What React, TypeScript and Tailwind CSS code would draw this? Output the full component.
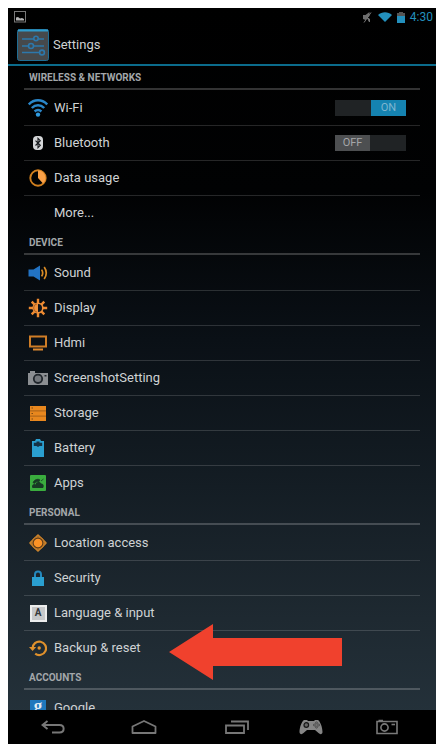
import { useState, type ReactNode } from "react";

const ORANGE = "#e8871e";
const BLUE = "#2a9fd0";

function WifiIcon() {
  return (
    <svg viewBox="0 0 20 18" className="w-5 h-[18px]" fill="none" stroke="#2a86c8" strokeWidth="2.5">
      <path d="M.8 5.400C6 0 14 0 19.200 5.400" />
      <path d="M3.800 9c3.700-3.800 8.700-3.800 12.400 0" />
      <path d="M6.600 12.500c2.100-2.100 4.700-2.100 6.800 0" />
      <circle cx="10" cy="15.600" r="2.200" fill="#2f9be0" stroke="none" />
    </svg>
  );
}

function BluetoothIcon() {
  return (
    <svg viewBox="0 0 10 14" className="w-[10px] h-[14px]">
      <rect width="10" height="14" rx="4" fill="#d4d6d8" />
      <path d="M2.500 4.700 7.300 9.300 5 11.600V2.400l2.300 2.300-4.800 4.800" fill="none" stroke="#16191c" strokeWidth="1.100" />
    </svg>
  );
}

function DataUsageIcon() {
  return (
    <svg viewBox="0 0 18 18" className="w-[18px] h-[18px]">
      <circle cx="9" cy="9" r="7.700" fill="none" stroke="#d07f1e" strokeWidth="1.900" />
      <path d="M9 9V1.500a7.500 7.500 0 0 1 5 13Z" fill="#f9a047" />
    </svg>
  );
}

function SoundIcon() {
  return (
    <svg viewBox="0 0 20 16" className="w-5 h-4">
      <path d="M.5 4.500h5L12 .5v15L5.500 11.500h-5Z" fill="#2273c4" />
      <path d="M13.600 4.600c1.300 2 1.300 4.800 0 6.800" fill="none" stroke="#d98b25" strokeWidth="1.700" />
      <path d="M16.200 2c2.500 3.600 2.500 8.400 0 12" fill="none" stroke="#d98b25" strokeWidth="1.700" />
    </svg>
  );
}

function DisplayIcon() {
  return (
    <svg viewBox="0 0 20 20" className="w-5 h-5">
      <path
        d="M10 .8v18.400M.8 10h18.400M3.700 3.700l12.600 12.600M3.700 16.300 16.300 3.700"
        stroke="#ee8a30"
        strokeWidth="2.400"
      />
      <circle cx="10" cy="10" r="5.600" fill="#f0903a" />
      <path d="M10 6a4 4 0 0 1 0 8Z" fill="#12161b" />
      <path d="M9 5.800a4.300 4.300 0 0 0 0 8.400" fill="none" stroke="#8d501c" strokeWidth="0.700" />
    </svg>
  );
}

function HdmiIcon() {
  return (
    <svg viewBox="0 0 18 16" className="w-[18px] h-4">
      <rect x="1" y="1.500" width="16" height="10" fill="none" stroke="#cf7d26" strokeWidth="2" />
      <path d="M4 13.500h10v2H4Z" fill="#e08a30" />
    </svg>
  );
}

function CameraIcon() {
  return (
    <svg viewBox="0 0 20 16" className="w-5 h-4">
      <path d="M0 3h2V1h5v2h13v12H0Z" fill="#8b8e92" />
      <circle cx="10" cy="8.800" r="4.200" fill="#74787d" stroke="#20262c" strokeWidth="1.800" />
      <path d="M16.500 5h2v1.500h-2Z" fill="#20262c" />
    </svg>
  );
}

function StorageIcon() {
  return (
    <svg viewBox="0 0 16 15" className="w-4 h-[15px]">
      <path d="M0 0h16v15H0Z" fill="#b2671a" />
      <path d="M0 0h16v4.200H0ZM0 5.400h16v4.200H0ZM0 10.800h16V15H0Z" fill={ORANGE} />
      <path d="M1.500 1.600h1.500v1h-1.500ZM1.500 7h1.500v1h-1.500ZM1.500 12.400h1.500v1h-1.500Z" fill="#7d4a12" />
    </svg>
  );
}

function BatteryIcon() {
  return (
    <svg viewBox="0 0 12 18" className="w-3 h-[18px]">
      <path d="M4 0h4l1 2h3v16H0V2h3Z" fill={BLUE} />
      <path d="M4.500 2.400h3v1.400h2.700v3.200H7.500L6 8 4.500 7H1.800V3.800h2.700Z" fill="#143246" />
    </svg>
  );
}

function AppsIcon() {
  return (
    <svg viewBox="0 0 16 16" className="w-4 h-4">
      <rect width="16" height="16" rx="1" fill="#3aad3e" />
      <path d="M2 11.500c0-2.500 2.500-3.200 3.500-2 .8-3 4.500-3 5.500-1 2.500 0 3.500 2.500 2 4.500H3.500C2.500 13 2 12.500 2 11.500Z" fill="#173a25" />
      <path d="M3 7.500c1.500-3 5-4 7-2.500L8.500 7C7 6.500 5 7 4.500 8.500ZM11 6l2.500-2" stroke="#173a25" strokeWidth="0.800" fill="#173a25" />
    </svg>
  );
}

function LocationIcon() {
  return (
    <svg viewBox="0 0 18 18" className="w-[18px] h-[18px]">
      <path d="M9 1.200 16.800 9 9 16.800 1.200 9Z" fill="none" stroke="#c9822c" strokeWidth="1.800" strokeLinejoin="round" />
      <circle cx="9" cy="9" r="6" fill="#5a3b1a" stroke="#c07a28" strokeWidth="1.200" />
      <circle cx="9" cy="9" r="4.300" fill="#fb9226" />
    </svg>
  );
}

function LockIcon() {
  return (
    <svg viewBox="0 0 12 16" className="w-3 h-4">
      <path d="M3 8V4.500a3 3 0 0 1 6 0V8" fill="none" stroke="#2488bd" strokeWidth="2" />
      <path d="M0 7h12v9H0Z" fill={BLUE} />
    </svg>
  );
}

function LanguageIcon() {
  return (
    <span className="flex size-[17px] items-center justify-center border-2 border-[#eceded] bg-[#c6c8ca] text-[10px] leading-none font-bold text-[#34383c]">
      A
    </span>
  );
}

function BackupIcon() {
  return (
    <svg viewBox="0 0 18 18" className="w-[18px] h-[18px]">
      <path d="M3.600 9.500A6.700 6.700 0 1 1 6.200 14.600" fill="none" stroke="#e0912c" strokeWidth="2.200" />
      <path d="M0 8h7.200L3.600 12Z" fill="#e0912c" />
      <circle cx="10.200" cy="9" r="1.700" fill="#e0912c" />
    </svg>
  );
}

function GoogleIcon() {
  return (
    <span className="flex size-4 items-center justify-center bg-[#1f78bd] pb-1 font-['Liberation_Serif',serif] text-[17px] leading-none font-bold text-[#e4edf4]">
      g
    </span>
  );
}

function Toggle({ label, on, onChange }: { label: string; on: boolean; onChange: (v: boolean) => void }) {
  return (
    <label className="relative mr-[14px] flex h-4 w-[71px] cursor-pointer bg-[#202325] text-[11px] leading-4">
      <input
        type="checkbox"
        className="sr-only"
        aria-label={label}
        checked={on}
        onChange={(e) => onChange(e.target.checked)}
      />
      {on ? (
        <span className="ml-auto w-[35px] bg-[#1583b1] text-center text-[#7fb6d0]">ON</span>
      ) : (
        <span className="w-[35px] bg-[#4d4f51] text-center text-[#a5a7a9]">OFF</span>
      )}
    </label>
  );
}

type RowProps = { icon?: ReactNode; text: string; children?: ReactNode };

function Row({ icon, text, children }: RowProps) {
  return (
    <li className="relative flex h-[35px] items-center border-b border-white/15 first:h-9 last:border-transparent">
      <a href="#" className="flex flex-1 items-center">
        <span className="mr-[2px] flex w-7 items-center justify-center">{icon}</span>
        {text}
      </a>
      {children}
    </li>
  );
}

function Section({ title, children }: { title: string; children: ReactNode }) {
  return (
    <section>
      <h2 className="h-6 border-b-2 border-white/20 pl-[5px] text-[10px] leading-6 font-bold text-[#a3a7aa]">
        {title}
      </h2>
      <ul>{children}</ul>
    </section>
  );
}

function StatusBar() {
  return (
    <div className="flex h-[18px] items-center pr-[3px] pl-[6px] text-[12px] text-[#2390bd]">
      <svg viewBox="0 0 12 12" className="size-3">
        <rect x="0.500" y="0.500" width="11" height="10.500" fill="none" stroke="#777" />
        <path d="M2 9.500V6.500l2-.5 2 1.500L8 7l2 1v1.500Z" fill="#b5b5b5" />
      </svg>
      <svg viewBox="0 0 9 12" className="mr-[6px] ml-auto h-3 w-[9px]">
        <path d="M0 4h2.500L6.500 1v4L2.500 9 0 8Z" fill="#6d6d6d" />
        <path d="m1 11.500 7-10M4.500 7 6.500 8v3Z" stroke="#777" fill="#6d6d6d" />
      </svg>
      <svg viewBox="0 0 14 10" className="mr-[5px] h-[10px] w-[14px]">
        <path d="M0 3C4-.8 10-.8 14 3L7 10Z" fill="#2390bd" />
      </svg>
      <svg viewBox="0 0 8 11" className="mr-[5px] h-[11px] w-2">
        <path d="M2 0h4v1h2v10H0V1h2Z" fill="#555" />
        <path d="M0 4h8v7H0Z" fill="#2390bd" />
      </svg>
      <time>4:30</time>
    </div>
  );
}

function TitleBar() {
  return (
    <header className="flex h-10 items-center border-b-2 border-[#0b6c8c] pl-[9px]">
      <svg viewBox="0 0 32 32" className="mr-1 size-8">
        <rect x="0.500" y="0.500" width="31" height="31" rx="2" fill="#46494b" stroke="#1f6d94" />
        <path d="M1 1.500h30" stroke="#2f9ccc" strokeWidth="2" />
        <g fill="none" stroke="#2d78ab" strokeWidth="1.600">
          <path d="M5 10h12M21.500 10H27M5 17h6M17 17h10M5 23.500h18" />
          <circle cx="19" cy="9.500" r="2.200" />
          <circle cx="14" cy="17" r="2.500" />
          <circle cx="25" cy="23.500" r="2.400" />
        </g>
      </svg>
      <h1>Settings</h1>
    </header>
  );
}

function NavBar() {
  return (
    <nav className="flex h-[34px] bg-black">
      <button aria-label="Back" className="flex grow-[90] basis-0 items-center justify-center">
        <svg viewBox="0 0 24 14" className="h-[14px] w-6" fill="none" stroke="#777" strokeWidth="2">
          <path d="M6.500 1 1.500 5l5 4M2 5h16.500c5.500 0 5.500 7.500 0 7.500H11" />
        </svg>
      </button>
      <button aria-label="Home" className="flex grow-[92] basis-0 items-center justify-center">
        <svg viewBox="0 0 26 14" className="h-[14px] w-[26px]" fill="none" stroke="#777" strokeWidth="1.800">
          <path d="M1.500 6.500 13 1l11.500 5.500V13h-23Z" strokeLinejoin="round" />
        </svg>
      </button>
      <button aria-label="Recent apps" className="flex grow-[94] basis-0 items-center justify-center">
        <svg viewBox="0 0 24 14" className="h-[14px] w-6" fill="none" stroke="#777" strokeWidth="1.800">
          <path d="M1 5.500h18V13H1ZM6 1.500h17V10" />
        </svg>
      </button>
      <button aria-label="Game pad" className="flex grow-[54] basis-0 items-center justify-center">
        <svg viewBox="0 0 24 16" className="h-4 w-6">
          <path
            d="M5 1h3l1 1h6l1-1h3c2.500 1.500 4.500 8 4.500 12 0 2.500-2.500 2.800-4 1L16 11H8l-3.500 3C3 15.800.5 15.500.5 13 .5 9 2.500 2.500 5 1Z"
            fill="#858585"
          />
          <circle cx="7.300" cy="6" r="2.300" fill="#666" stroke="#151515" strokeWidth="1.200" />
          <g fill="none" stroke="#3a3a3a" strokeWidth="0.700">
            <circle cx="17.500" cy="3.900" r="1" />
            <circle cx="17.500" cy="8.100" r="1" />
            <circle cx="15.400" cy="6" r="1" />
            <circle cx="19.600" cy="6" r="1" />
          </g>
        </svg>
      </button>
      <button aria-label="Take screenshot" className="flex grow-[98] basis-0 items-center justify-center">
        <svg viewBox="0 0 22 16" className="h-4 w-[22px]" fill="none" stroke="#7a7a7a" strokeWidth="1.600">
          <path d="M1 2.500h20v12H1ZM2.500 1.500H7" />
          <circle cx="8.500" cy="8.500" r="3.600" />
          <path d="M15.500 5.500H19" />
        </svg>
      </button>
    </nav>
  );
}

export default function App() {
  const [wifi, setWifi] = useState(true);
  const [bluetooth, setBluetooth] = useState(false);

  return (
    <div className="h-screen bg-white pt-2 pr-1 pb-1 pl-2">
      <div className="flex h-full flex-col overflow-hidden bg-[linear-gradient(#000_0%,#010203_25%,#0a1016_45%,#141d24_65%,#1e2931_83%,#24313a_96%)] font-[Roboto,sans-serif] text-[13px] text-[#cfd2d4]">
        <StatusBar />
        <TitleBar />
        <main className="min-h-0 flex-1 overflow-hidden px-4">
          <Section title="WIRELESS & NETWORKS">
            <Row icon={<WifiIcon />} text="Wi-Fi">
              <Toggle label="Wi-Fi" on={wifi} onChange={setWifi} />
            </Row>
            <Row icon={<BluetoothIcon />} text="Bluetooth">
              <Toggle label="Bluetooth" on={bluetooth} onChange={setBluetooth} />
            </Row>
            <Row icon={<DataUsageIcon />} text="Data usage" />
            <Row text="More..." />
          </Section>
          <Section title="DEVICE">
            <Row icon={<SoundIcon />} text="Sound" />
            <Row icon={<DisplayIcon />} text="Display" />
            <Row icon={<HdmiIcon />} text="Hdmi" />
            <Row icon={<CameraIcon />} text="ScreenshotSetting" />
            <Row icon={<StorageIcon />} text="Storage" />
            <Row icon={<BatteryIcon />} text="Battery" />
            <Row icon={<AppsIcon />} text="Apps" />
          </Section>
          <Section title="PERSONAL">
            <Row icon={<LocationIcon />} text="Location access" />
            <Row icon={<LockIcon />} text="Security" />
            <Row icon={<LanguageIcon />} text="Language & input" />
            <Row icon={<BackupIcon />} text="Backup & reset">
              <svg
                viewBox="0 0 173 56"
                className="pointer-events-none absolute -top-[7px] left-[145px] h-14 w-[173px]"
              >
                <path d="M0 28 44 0v14h129v28H44v14Z" fill="#f0412d" />
              </svg>
            </Row>
          </Section>
          <Section title="ACCOUNTS">
            <Row icon={<GoogleIcon />} text="Google" />
          </Section>
        </main>
        <NavBar />
      </div>
    </div>
  );
}
